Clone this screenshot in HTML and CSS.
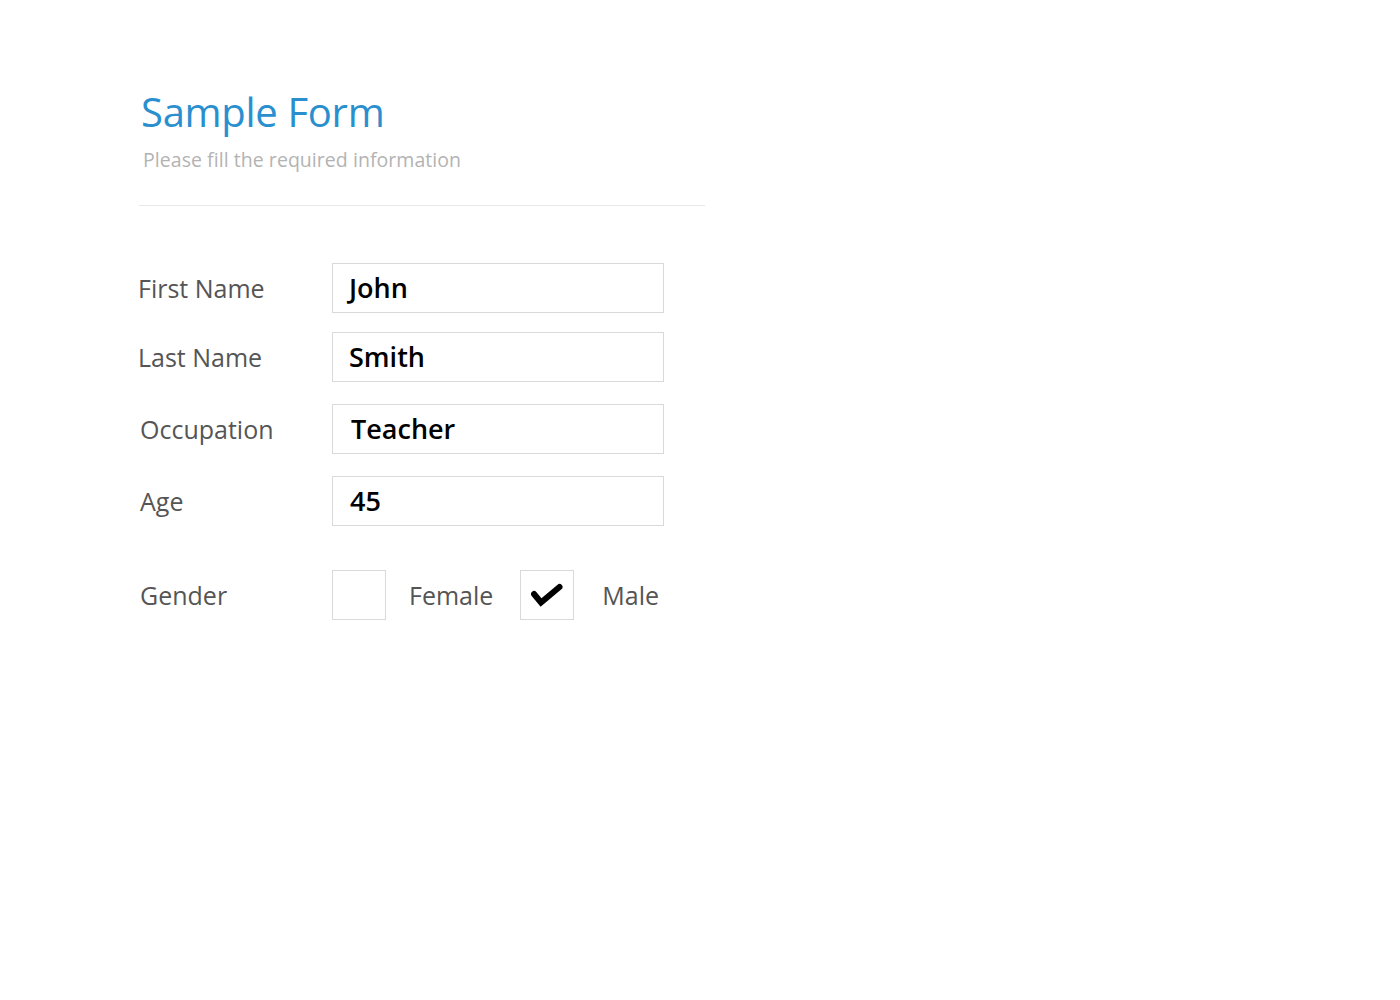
FILE: index.html
```html
<!DOCTYPE html>
<html>
<head>
<meta charset="utf-8">
<title>Sample Form</title>
<link rel="stylesheet" href="styles.css">
</head>
<body>
<div class="page">
  <header class="head">
    <h1 class="title">Sample Form</h1>
    <p class="subtitle">Please fill the required information</p>
  </header>
  <div class="divider"></div>
  <form class="form">
    <div class="row row-1">
      <label class="label">First Name</label>
      <div class="field"><span class="value value-john">John</span></div>
    </div>
    <div class="row row-2">
      <label class="label">Last Name</label>
      <div class="field"><span class="value value-smith">Smith</span></div>
    </div>
    <div class="row row-3">
      <label class="label label-shift">Occupation</label>
      <div class="field"><span class="value value-shift">Teacher</span></div>
    </div>
    <div class="row row-4">
      <label class="label label-shift">Age</label>
      <div class="field"><span class="value value-shift1">45</span></div>
    </div>
    <div class="row row-5">
      <label class="label label-shift">Gender</label>
      <div class="choices">
        <span class="box"></span>
        <span class="choice-text female">Female</span>
        <span class="box checked">
          <svg width="32" height="28" viewBox="0 0 32 28"><path d="M3 13 L10 21.5 L28.5 6" fill="none" stroke="#000" stroke-width="6" stroke-linecap="round" stroke-linejoin="miter"/></svg>
        </span>
        <span class="choice-text male">Male</span>
      </div>
    </div>
  </form>
</div>
</body>
</html>
```
FILE: styles.css
```css
html, body {
  margin: 0;
  padding: 0;
  background: #ffffff;
}
.page {
  font-family: "Open Sans", "Noto Sans", sans-serif;
  padding-left: 139px;
  width: 566px;
}
.head {
  padding-left: 2px;
}
.title {
  margin: 0;
  padding-top: 92px;
  font-size: 40px;
  line-height: 1;
  font-weight: 400;
  color: #2a8fcf;
  letter-spacing: -0.3px;
}
.subtitle {
  margin: 18px 0 0 2px;
  font-size: 19.5px;
  line-height: 1;
  color: #b3b3b3;
  letter-spacing: 0.05px;
}
.divider {
  margin-top: 35px;
  height: 1px;
  background: #e8e8e8;
}
.form {
  display: flex;
  flex-direction: column;
}
.row {
  display: flex;
  align-items: center;
}
.row-1 { margin-top: 57px; }
.row-2 { margin-top: 19px; }
.row-3 { margin-top: 22px; }
.row-4 { margin-top: 22px; }
.row-5 { margin-top: 44px; }
.label {
  width: 194px;
  margin-left: -1px;
  font-size: 25px;
  line-height: 1;
  color: #555555;
  padding-top: 2px;
}
.label-shift {
  margin-left: 1px;
  width: 192px;
}
.field {
  box-sizing: border-box;
  width: 332px;
  height: 50px;
  border: 1px solid #d9d9d9;
  display: flex;
  align-items: center;
  padding-left: 15px;
}
.value {
  font-size: 27px;
  line-height: 1;
  font-weight: 600;
  color: #000;
  padding-bottom: 1px;
}
.value-john { margin-left: 1px; }
.value-smith { margin-left: 1px; }
.value-shift { margin-left: 3px; }
.value-shift1 { margin-left: 2px; }
.choices {
  display: flex;
  align-items: center;
}
.box {
  box-sizing: border-box;
  width: 54px;
  height: 50px;
  border: 1px solid #d9d9d9;
  display: flex;
  align-items: center;
  justify-content: center;
}
.choice-text {
  font-size: 25px;
  line-height: 1;
  color: #555555;
  padding-top: 1px;
}
.female {
  margin-left: 23px;
  margin-right: 27px;
}
.male {
  margin-left: 28px;
}
```
